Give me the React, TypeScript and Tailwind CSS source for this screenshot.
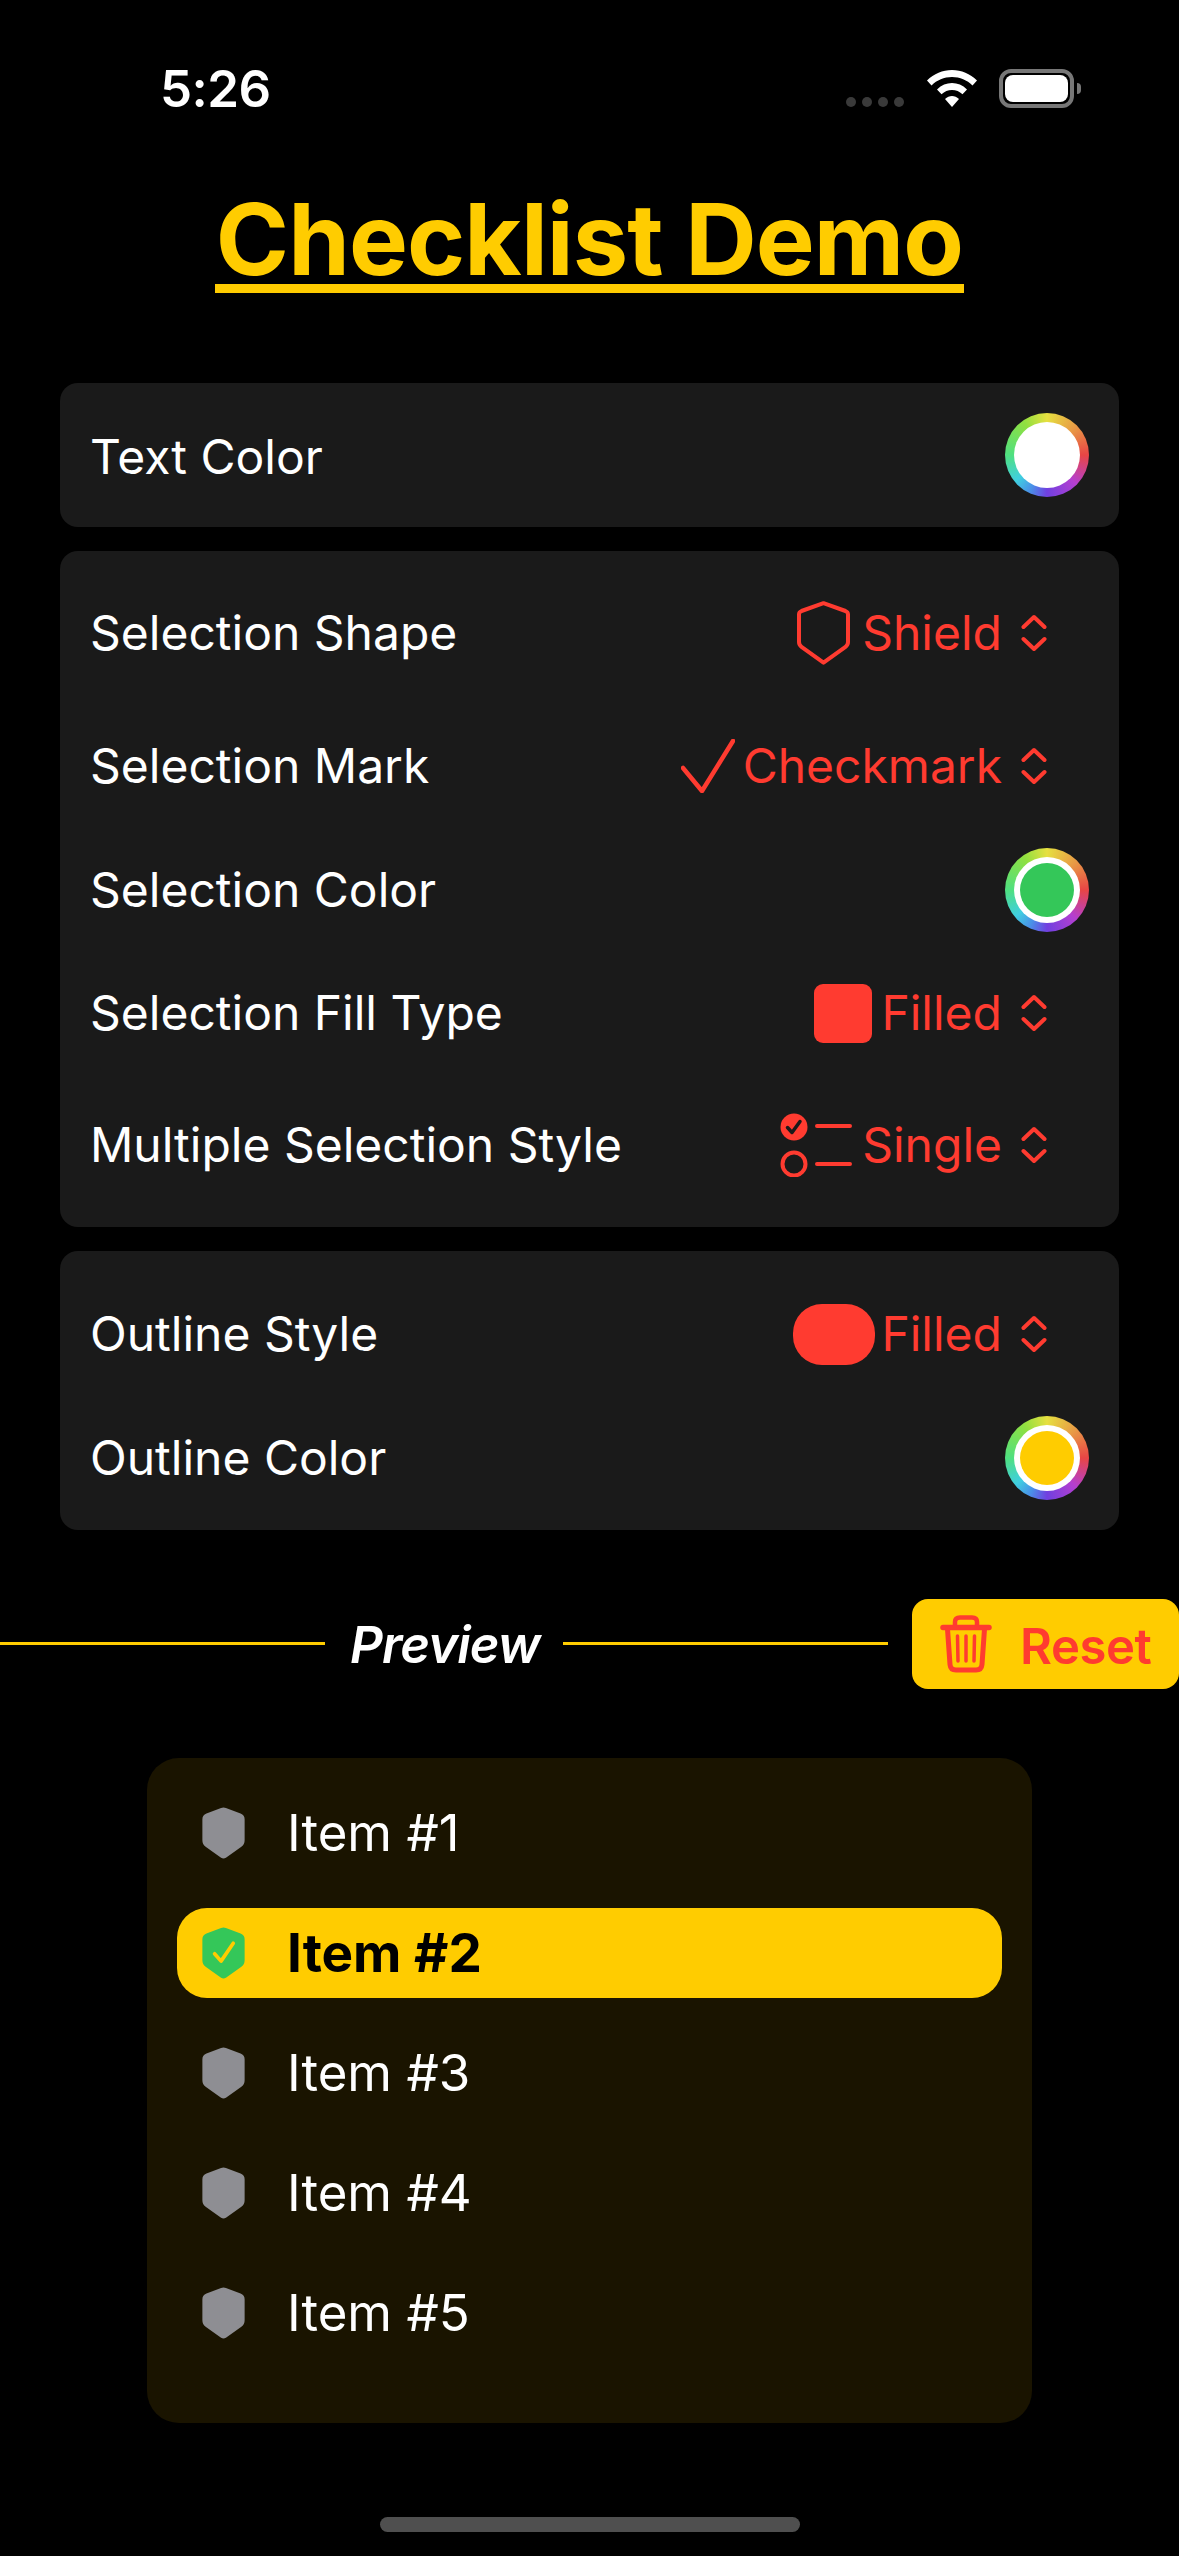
const RED = "#ff3b30";

function Chevrons() {
  return (
    <svg width="26" height="38" viewBox="0 0 26 38" fill="none" stroke={RED} strokeWidth="4" strokeLinecap="round" strokeLinejoin="round">
      <path d="M2.5 13 L13 3 L23.5 13" />
      <path d="M2.5 25 L13 35 L23.5 25" />
    </svg>
  );
}

function ColorWell({ inner }: { inner: string }) {
  return (
    <div className="w-[84px] h-[84px] rounded-full flex items-center justify-center bg-[conic-gradient(#e6e040_0deg,#e89a45_45deg,#e84545_90deg,#b43fd0_135deg,#7040e0_180deg,#4a90e8_205deg,#40cfe0_230deg,#4fe080_270deg,#90e040_325deg,#e6e040_360deg)]">
      <div className="w-[66px] h-[66px] rounded-full bg-white flex items-center justify-center">
        <div className={`w-[54px] h-[54px] rounded-full ${inner}`} />
      </div>
    </div>
  );
}

const SHIELD = "M26 0.5 C27 0.5 28 0.8 29 1.2 L47 8 Q52 10 52 15 V41 Q52 46 48 49 L29 62.500 Q26 64.500 23 62.500 L4 49 Q0 46 0 41 V15 Q0 10 5 8 L23 1.2 C24 0.8 25 0.5 26 0.5 Z";

function ShieldOutline() {
  return (
    <svg width="53" height="64" viewBox="0 0 53 64" fill="none" stroke={RED} strokeWidth="4" strokeLinejoin="round">
      <path d="M26.500 2.200 L48.500 10 Q51 11 51 13.500 V41 Q51 44 48.500 45.800 L26.500 61.700 L4.500 45.800 Q2 44 2 41 V13.500 Q2 11 4.500 10 Z" />
    </svg>
  );
}

function CheckIcon() {
  return (
    <svg width="54" height="54" viewBox="0 0 54 54" fill="none" stroke={RED} strokeWidth="4.500" strokeLinecap="round" strokeLinejoin="round">
      <path d="M2 29 L21 52 L52 2" />
    </svg>
  );
}

function SingleIcon() {
  return (
    <svg width="72" height="64" viewBox="0 0 72 64" fill="none">
      <circle cx="14" cy="14" r="13.500" fill={RED} />
      <path d="M7.500 14.500 L12 19.500 L20 8.500" stroke="#1a1a1a" strokeWidth="3.500" strokeLinecap="round" strokeLinejoin="round" />
      <circle cx="14" cy="51" r="11.500" stroke={RED} strokeWidth="4" />
      <path d="M37 13 H70 M37 51 H70" stroke={RED} strokeWidth="4" strokeLinecap="round" />
    </svg>
  );
}

function TrashIcon() {
  return (
    <svg width="52" height="58" viewBox="0 0 52 58" fill="none" stroke={RED} strokeLinecap="round" strokeLinejoin="round">
      <path d="M15 11 V7 Q15 2.500 20 2.500 H32 Q37 2.500 37 7 V11" strokeWidth="4.500" />
      <path d="M3 12.500 H49" strokeWidth="5.500" />
      <path d="M7.500 14 L10 49.500 Q10.500 55 16 55 H36 Q41.500 55 42 49.500 L44.500 14" strokeWidth="5" />
      <path d="M17.500 21 L18 46 M26 21 V46 M34.500 21 L34 46" strokeWidth="3.500" />
    </svg>
  );
}

function Row({ label, className, children }: { label: string; className: string; children: React.ReactNode }) {
  return (
    <div className={`flex items-center justify-between ${className}`}>
      <span className="text-[48px] leading-none text-white -ml-[1px]">{label}</span>
      {children}
    </div>
  );
}

function Picker({ value, gap, icon }: { value: string; gap: string; icon: React.ReactNode }) {
  return (
    <div className="flex items-center mr-[42px]">
      <div className={`flex items-center ${gap}`}>{icon}</div>
      <span className="text-[48px] leading-none text-[#ff3b30]">{value}</span>
      <div className="ml-[19px] flex items-center">
        <Chevrons />
      </div>
    </div>
  );
}

function ListItem({ label, selected }: { label: string; selected?: boolean }) {
  return (
    <div className={`h-[90px] flex items-center pl-[25px] rounded-[30px] ${selected ? "bg-[#ffcc00]" : ""}`}>
      <svg width="43" height="52" viewBox="0 0 52 64" className="shrink-0">
        <path d={SHIELD} fill={selected ? "#34c759" : "#8e8e93"} />
        {selected && (
          <path d="M15 33 L23 42 L38 20" fill="none" stroke="#ffcc00" strokeWidth="4.500" strokeLinecap="round" strokeLinejoin="round" />
        )}
      </svg>
      <span className={`ml-[42px] leading-none ${selected ? "text-[53px] font-bold text-black" : "text-[51px] text-white mb-[2px]"}`}>
        {label}
      </span>
    </div>
  );
}

export default function App() {
  return (
    <div className="relative w-[1179px] h-[2556px] bg-black overflow-hidden flex flex-col font-['Inter',sans-serif]">
      {/* Status bar */}
      <div className="h-[108px] pt-[68px] pl-[160px] pr-[98px] flex items-center justify-between">
        <span className="text-[51px] leading-none font-semibold text-white tracking-[-0.5px]">5:26</span>
        <div className="flex items-center">
          <div className="flex gap-[6px] self-end mb-[1px] mr-[23px]">
            <div className="w-[10px] h-[10px] rounded-full bg-[#3a3a3a]" />
            <div className="w-[10px] h-[10px] rounded-full bg-[#3a3a3a]" />
            <div className="w-[10px] h-[10px] rounded-full bg-[#3a3a3a]" />
            <div className="w-[10px] h-[10px] rounded-full bg-[#3a3a3a]" />
          </div>
          <svg width="50" height="37" viewBox="0 0 50 37" fill="white">
            <path d="M25 0 C34.500 0 43 3.700 50 10.500 L45.500 15.500 C40 10 33 7 25 7 C17 7 10 10 4.500 15.500 L0 10.500 C7 3.700 15.500 0 25 0 Z" />
            <path d="M25 13 C30.500 13 35.500 15 40 19.500 L35.500 24.300 C32.500 21.500 29 20 25 20 C21 20 17.500 21.500 14.500 24.300 L10 19.500 C14.500 15 19.500 13 25 13 Z" />
            <path d="M25 26 C27.500 26 29.800 27 32 29 L25 37 L18 29 C20.200 27 22.500 26 25 26 Z" />
          </svg>
          <div className="ml-[22px] w-[75px] h-[39px] rounded-[12px] border-[4px] border-[#777777] p-[2px]">
            <div className="w-full h-full rounded-[8px] bg-white" />
          </div>
          <div className="ml-[3px] w-[4px] h-[11px] rounded-r-full bg-[#777777]" />
        </div>
      </div>

      {/* Title */}
      <div className="mt-[86px] flex justify-center">
        <h1 className="text-[99px] leading-[90px] font-bold text-[#ffcc00] border-b-[9px] border-[#ffcc00] tracking-[-0.9px] px-[1px]">
          Checklist Demo
        </h1>
      </div>

      {/* Settings */}
      <div className="mt-[90px] mx-[60px] flex flex-col gap-[24px]">
        <div className="bg-[#1a1a1a] rounded-[18px] h-[144px] pl-[31px] pr-[30px] flex flex-col justify-center">
          <Row label="Text Color" className="h-[114px] [&>span]:mt-[3px]">
            <ColorWell inner="bg-white" />
          </Row>
        </div>

        <div className="bg-[#1a1a1a] rounded-[18px] py-[16px] pl-[31px] pr-[30px]">
          <Row label="Selection Shape" className="h-[132px]">
            <Picker value="Shield" gap="mr-[12px]" icon={<ShieldOutline />} />
          </Row>
          <Row label="Selection Mark" className="h-[134px]">
            <Picker value="Checkmark" gap="mr-[8px]" icon={<CheckIcon />} />
          </Row>
          <Row label="Selection Color" className="h-[114px]">
            <ColorWell inner="bg-[#34c759]" />
          </Row>
          <Row label="Selection Fill Type" className="h-[132px]">
            <Picker value="Filled" gap="mr-[9px]" icon={<div className="w-[58px] h-[59px] rounded-[9px] bg-[#ff3b30]" />} />
          </Row>
          <Row label="Multiple Selection Style" className="h-[132px]">
            <Picker value="Single" gap="mr-[10px]" icon={<SingleIcon />} />
          </Row>
        </div>

        <div className="bg-[#1a1a1a] rounded-[18px] py-[16px] pl-[31px] pr-[30px]">
          <Row label="Outline Style" className="h-[134px]">
            <Picker value="Filled" gap="mr-[6px]" icon={<div className="w-[82px] h-[61px] rounded-[29px] bg-[#ff3b30]" />} />
          </Row>
          <Row label="Outline Color" className="h-[113px]">
            <ColorWell inner="bg-[#ffcc00]" />
          </Row>
        </div>
      </div>

      {/* Preview header */}
      <div className="mt-[69px] flex items-center">
        <div className="w-[325px] h-[3px] mb-[2px] bg-[#ffcc00]" />
        <span className="ml-[25px] w-[213px] text-[51px] leading-none font-semibold italic text-white tracking-[-0.9px]">Preview</span>
        <div className="w-[325px] h-[3px] mb-[2px] bg-[#ffcc00]" />
        <div className="ml-[24px] flex-1 h-[90px] rounded-[16px] bg-[#ffcc00] flex items-center pl-[28px]">
          <TrashIcon />
          <span className="ml-[28px] mt-[4px] text-[49px] leading-none font-semibold text-[#ff3b30] tracking-[-0.4px]">Reset</span>
        </div>
      </div>

      {/* Preview list */}
      <div className="mt-[69px] mx-[147px] h-[665px] rounded-[32px] bg-[#1a1400] px-[30px] pt-[30px] flex flex-col gap-[30px]">
        <ListItem label="Item #1" />
        <ListItem label="Item #2" selected />
        <ListItem label="Item #3" />
        <ListItem label="Item #4" />
        <ListItem label="Item #5" />
      </div>

      {/* Home indicator */}
      <div className="mt-[94px] mx-auto w-[420px] h-[15px] rounded-full bg-[#4f4f4f]" />
    </div>
  );
}
